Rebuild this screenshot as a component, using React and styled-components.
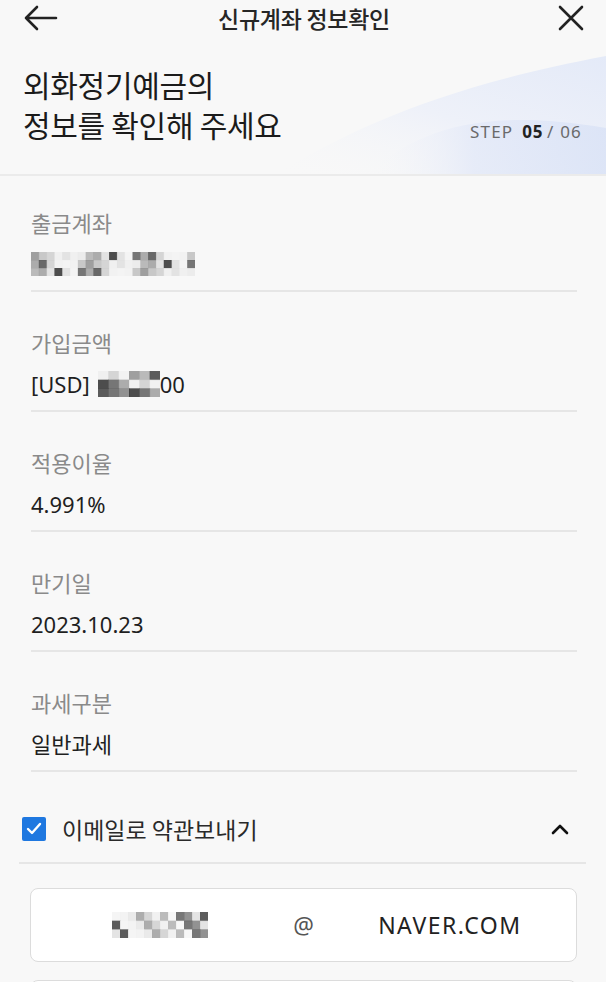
import React from 'react'
import styled, { createGlobalStyle } from 'styled-components'

const GlobalStyle = createGlobalStyle`
  *, *::before, *::after {
    box-sizing: border-box;
  }
  body {
    margin: 0;
    background: #f8f8f8;
    font-family: "Noto Sans", "Noto Sans CJK KR", sans-serif;
    color: #222;
  }
`

const Page = styled.div`
  width: 606px;
  height: 982px;
  overflow: hidden;
  background: #f8f8f8;
`

const TopBar = styled.div`
  height: 36px;
  display: grid;
  grid-template-columns: 1fr auto 1fr;
  align-items: center;
  padding: 0 22px 0 24px;
`

const IconButton = styled.button`
  border: 0;
  background: none;
  padding: 0;
  width: 34px;
  height: 28px;
  display: flex;
  align-items: center;
  justify-content: ${props => props.right ? 'flex-end' : 'flex-start'};
  justify-self: ${props => props.right ? 'end' : 'start'};
  color: #222;
`

const Title = styled.h1`
  margin: 0;
  font-size: 23px;
  font-weight: 500;
  letter-spacing: -0.3px;
  color: #262626;
  font-family: "Noto Sans CJK KR", sans-serif;
`

const Intro = styled.section`
  position: relative;
  height: 140px;
  padding: 30px 24px 0 23px;
  display: flex;
  justify-content: space-between;
  align-items: flex-start;
  border-bottom: 2px solid #ebebeb;
  overflow: hidden;
`

const Wave = styled.svg`
  position: absolute;
  right: 0;
  bottom: 0;
  width: 340px;
  height: 138px;
`

const Heading = styled.h2`
  position: relative;
  margin: -2px 0 0;
  font-size: 30px;
  line-height: 40px;
  font-weight: 400;
  letter-spacing: -0.3px;
  color: #1b1b1b;
  font-family: "Noto Sans CJK KR", sans-serif;
`

const Step = styled.div`
  position: relative;
  margin-top: 54px;
  font-size: 17px;
  color: #6a6a6a;
  letter-spacing: 1.2px;
  b {
    margin-left: 9px;
    color: #222;
    font-weight: 700;
    letter-spacing: 0.6px;
  }
  span {
    margin-left: 4px;
  }
`

const Fields = styled.div`
  padding: 0 29px 0 31px;
`

const Field = styled.div`
  padding-top: 35px;
  border-bottom: 2px solid #e6e6e6;
  &:first-child {
    padding-top: 31px;
  }
`

const Label = styled.div`
  font-size: 22px;
  line-height: 30px;
  color: #8a8a8a;
  font-family: "Noto Sans CJK KR", sans-serif;
`

const Value = styled.div`
  margin: 12px 0 11px;
  height: 30px;
  font-size: 22px;
  line-height: 30px;
  color: #1f1f1f;
  display: flex;
  align-items: center;
  font-family: "Noto Sans", "Noto Sans CJK KR", sans-serif;
`

const Blur = styled.span`
  display: flex;
  margin: 0 ${props => props.after || 0}px 0 ${props => props.before || 0}px;
`

const CheckRow = styled.div`
  margin: 0 20px 0 19px;
  padding: 42px 16px 18px 3px;
  display: flex;
  align-items: center;
  border-bottom: 2px solid #e6e6e6;
`

const Box = styled.span`
  width: 24px;
  height: 24px;
  border-radius: 2px;
  background: #1f78e0;
  display: flex;
  align-items: center;
  justify-content: center;
`

const CheckText = styled.span`
  margin-left: 16px;
  flex: 1;
  font-size: 23px;
  line-height: 30px;
  color: #2a2a2a;
  font-family: "Noto Sans CJK KR", sans-serif;
`

const EmailBox = styled.div`
  margin: ${props => props.first ? 24 : 18}px 29px 0 30px;
  height: 74px;
  border: 1px solid #dcdcdc;
  border-radius: 8px;
  background: #fff;
  display: grid;
  grid-template-columns: 1fr auto 1fr;
  align-items: center;
  font-size: 23px;
  color: #222;
`

const EmailPart = styled.div`
  display: flex;
  justify-content: center;
  padding-left: ${props => props.pad || 0}px;
  letter-spacing: ${props => props.spaced ? 1.5 : 0}px;
`

const At = styled.span`
  color: #555;
  padding: 0 4px;
`

const cellShades = {
  account: ['#888', '#f0f0f0', '#555', '#ddd', '#eee', '#bbb', '#f3f3f3', '#999', '#222', '#e8e8e8', '#ccc', '#f0f0f0', '#444', '#ddd', '#aaa', '#eee', '#bbb', '#ccc', '#f2f2f2', '#999', '#ddd'],
  amount: ['#eee', '#555', '#777', '#333', '#888', '#ccc', '#999', '#222', '#555', '#aaa', '#f0f0f0'],
  email: ['#f3f3f3', '#eee', '#ddd', '#999', '#555', '#f0f0f0', '#aaa', '#333', '#ccc', '#777', '#e5e5e5', '#f5f5f5']
}

function Mosaic({ kind, width, height, cols, rows }) {
  const shades = cellShades[kind]
  const cw = width / cols
  const ch = height / rows
  const cells = []
  for (let r = 0; r < rows; r++) {
    for (let c = 0; c < cols; c++) {
      cells.push(
        <rect key={r + '-' + c} x={c * cw} y={r * ch} width={cw + 0.5} height={ch + 0.5}
          fill={shades[(c * 5 + r * 7) % shades.length]} opacity={0.8} />
      )
    }
  }
  return <svg width={width} height={height}>{cells}</svg>
}

export default function App() {
  return (
    <Page>
      <GlobalStyle />
      <TopBar>
        <IconButton aria-label="back">
          <svg width="34" height="26" viewBox="0 0 34 26" fill="none" stroke="#222" strokeWidth="2.6" strokeLinecap="round" strokeLinejoin="round">
            <path d="M32 13H2M13 2L2 13l11 11" />
          </svg>
        </IconButton>
        <Title>신규계좌 정보확인</Title>
        <IconButton right aria-label="close">
          <svg width="26" height="26" viewBox="0 0 26 26" fill="none" stroke="#222" strokeWidth="2.6" strokeLinecap="round">
            <path d="M2 2l22 22M24 2L2 24" />
          </svg>
        </IconButton>
      </TopBar>

      <Intro>
        <Wave viewBox="0 0 340 138" preserveAspectRatio="none">
          <defs>
            <linearGradient id="w1" x1="0" y1="1" x2="1" y2="0">
              <stop offset="0" stopColor="#f8f8f8" stopOpacity="0" />
              <stop offset="0.5" stopColor="#eef1f9" />
              <stop offset="1" stopColor="#e4eaf8" />
            </linearGradient>
            <linearGradient id="w2" x1="0" y1="0" x2="1" y2="0">
              <stop offset="0" stopColor="#f8f8f8" stopOpacity="0" />
              <stop offset="0.45" stopColor="#e3e9f8" />
              <stop offset="1" stopColor="#d9e2f6" />
            </linearGradient>
          </defs>
          <path d="M10 138 C90 90 180 50 340 20 V138 Z" fill="url(#w1)" />
          <path d="M100 138 C150 96 210 70 340 92 V138 Z" fill="url(#w2)" opacity="0.8" />
        </Wave>
        <Heading>외화정기예금의<br />정보를 확인해 주세요</Heading>
        <Step>STEP<b>05</b><span>/ 06</span></Step>
      </Intro>

      <Fields>
        <Field>
          <Label>출금계좌</Label>
          <Value><Mosaic kind="account" width={164} height={24} cols={21} rows={3} /></Value>
        </Field>
        <Field>
          <Label>가입금액</Label>
          <Value>[USD]<Blur before={8}><Mosaic kind="amount" width={62} height={26} cols={6} rows={3} /></Blur>00</Value>
        </Field>
        <Field>
          <Label>적용이율</Label>
          <Value>4.991%</Value>
        </Field>
        <Field>
          <Label>만기일</Label>
          <Value>2023.10.23</Value>
        </Field>
        <Field>
          <Label>과세구분</Label>
          <Value>일반과세</Value>
        </Field>
      </Fields>

      <CheckRow>
        <Box>
          <svg width="16" height="14" viewBox="0 0 16 14" fill="none" stroke="#fff" strokeWidth="2.4" strokeLinecap="round" strokeLinejoin="round">
            <path d="M2 7l4 4 8-9" />
          </svg>
        </Box>
        <CheckText>이메일로 약관보내기</CheckText>
        <svg width="20" height="14" viewBox="0 0 20 14" fill="none" stroke="#111" strokeWidth="2.6" strokeLinecap="round" strokeLinejoin="round">
          <path d="M3 11l7-7 7 7" />
        </svg>
      </CheckRow>

      <EmailBox first>
        <EmailPart><Mosaic kind="email" width={96} height={26} cols={12} rows={3} /></EmailPart>
        <At>@</At>
        <EmailPart pad={6} spaced>NAVER.COM</EmailPart>
      </EmailBox>
      <EmailBox />
    </Page>
  )
}
